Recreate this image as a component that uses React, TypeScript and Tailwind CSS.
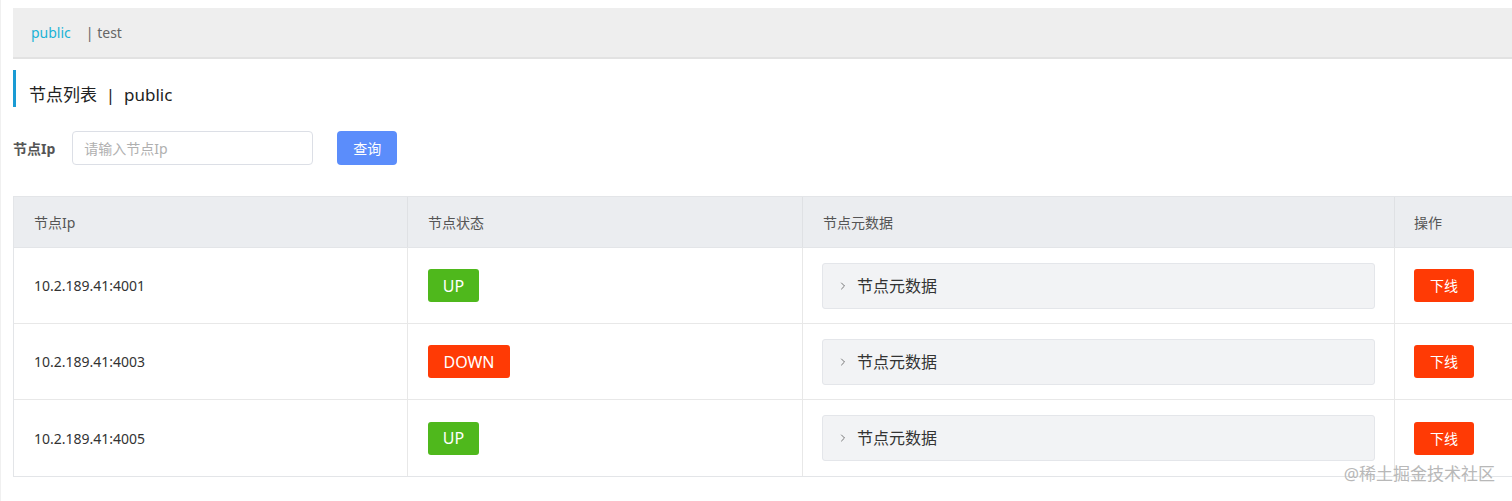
import { ChevronRight } from "lucide-react"

const nodes = [
  { ip: "10.2.189.41:4001", up: true },
  { ip: "10.2.189.41:4003", up: false },
  { ip: "10.2.189.41:4005", up: true },
]

function StatusTag({ up }: { up: boolean }) {
  return up ? (
    <span className="inline-flex h-[33px] w-[51px] items-center justify-center rounded-[3px] bg-[#4fb81c] text-[16px] text-white">
      UP
    </span>
  ) : (
    <span className="inline-flex h-[33px] w-[82px] items-center justify-center rounded-[3px] bg-[#ff3a05] text-[16px] text-white">
      DOWN
    </span>
  )
}

function App() {
  return (
    <div
      className="relative h-[501px] w-[1512px] overflow-hidden bg-white pl-[13px] pt-[8px] text-[#333]"
      style={{ fontFamily: '"Noto Sans", "Noto Sans CJK SC", sans-serif' }}
    >
      <div className="absolute left-0 top-0 h-full w-px bg-[#f0f0f0]" />
      {/* tabs */}
      <div className="flex h-[51px] items-center border-b-2 border-[#e2e2e2] bg-[#eeeeee] pl-[18px] text-[14px]">
        <span className="text-[#1bb3d6]">public</span>
        <span className="ml-[15px] text-[#666]">| test</span>
      </div>

      {/* title */}
      <div className="mt-[11px] flex h-[37px] items-center border-l-[3px] border-[#1a9bd4] pl-[13px] pt-[12px] text-[17px] text-[#222]">
        节点列表&nbsp;&nbsp;|&nbsp;&nbsp;public
      </div>

      {/* search */}
      <div className="mt-[24px] flex items-center">
        <span className="text-[14px] font-bold text-[#555]">节点Ip</span>
        <div className="ml-[17px] flex h-[34px] w-[241px] items-center rounded-[4px] border border-[#dcdfe6] pl-[11px] text-[14px] text-[#b0b0b0]">
          请输入节点Ip
        </div>
        <button className="ml-[24px] h-[34px] w-[60px] rounded-[4px] bg-[#5b8dfb] text-[14px] text-white">
          查询
        </button>
      </div>

      {/* table */}
      <div className="mt-[31px] border-l border-t border-b border-[#e3e5e8]">
        <div className="flex h-[51px] items-center border-b border-[#e3e5e8] bg-[#ebedf0] text-[14px] text-[#555]">
          <div className="w-[393px] pl-[20px]">节点Ip</div>
          <div className="flex h-full w-[395px] items-center border-l border-[#dfe1e4] pl-[20px]">节点状态</div>
          <div className="flex h-full w-[592px] items-center border-l border-[#dfe1e4] pl-[20px]">节点元数据</div>
          <div className="flex h-full flex-1 items-center border-l border-[#dfe1e4] pl-[19px]">操作</div>
        </div>
        {nodes.map((n, i) => (
          <div
            key={n.ip}
            className={
              "flex h-[76px] items-center text-[14px] " +
              (i < nodes.length - 1 ? "border-b border-[#e8e8e8]" : "")
            }
          >
            <div className="w-[393px] pl-[20px] text-[#333]">{n.ip}</div>
            <div className="flex h-full w-[395px] items-center border-l border-[#e8e8e8] pl-[20px]">
              <StatusTag up={n.up} />
            </div>
            <div className="flex h-full w-[592px] items-center border-l border-[#e8e8e8] px-[19px]">
              <div className="flex h-[46px] w-full items-center rounded-[3px] border border-[#e4e6ea] bg-[#f2f3f5] pl-[14px] text-[16px] text-[#333]">
                <ChevronRight className="h-[12px] w-[12px] text-[#555]" strokeWidth={1.6} />
                <span className="ml-[8px]">节点元数据</span>
              </div>
            </div>
            <div className="flex h-full flex-1 items-center border-l border-[#e8e8e8] pl-[19px]">
              <button className="h-[33px] w-[60px] rounded-[3px] bg-[#ff3a05] text-[14px] text-white">
                下线
              </button>
            </div>
          </div>
        ))}
      </div>

      <div className="absolute right-[17px] top-[462px] text-[17px] leading-[24px] text-[#b8b8b8]">@稀土掘金技术社区</div>
    </div>
  )
}

export default App
